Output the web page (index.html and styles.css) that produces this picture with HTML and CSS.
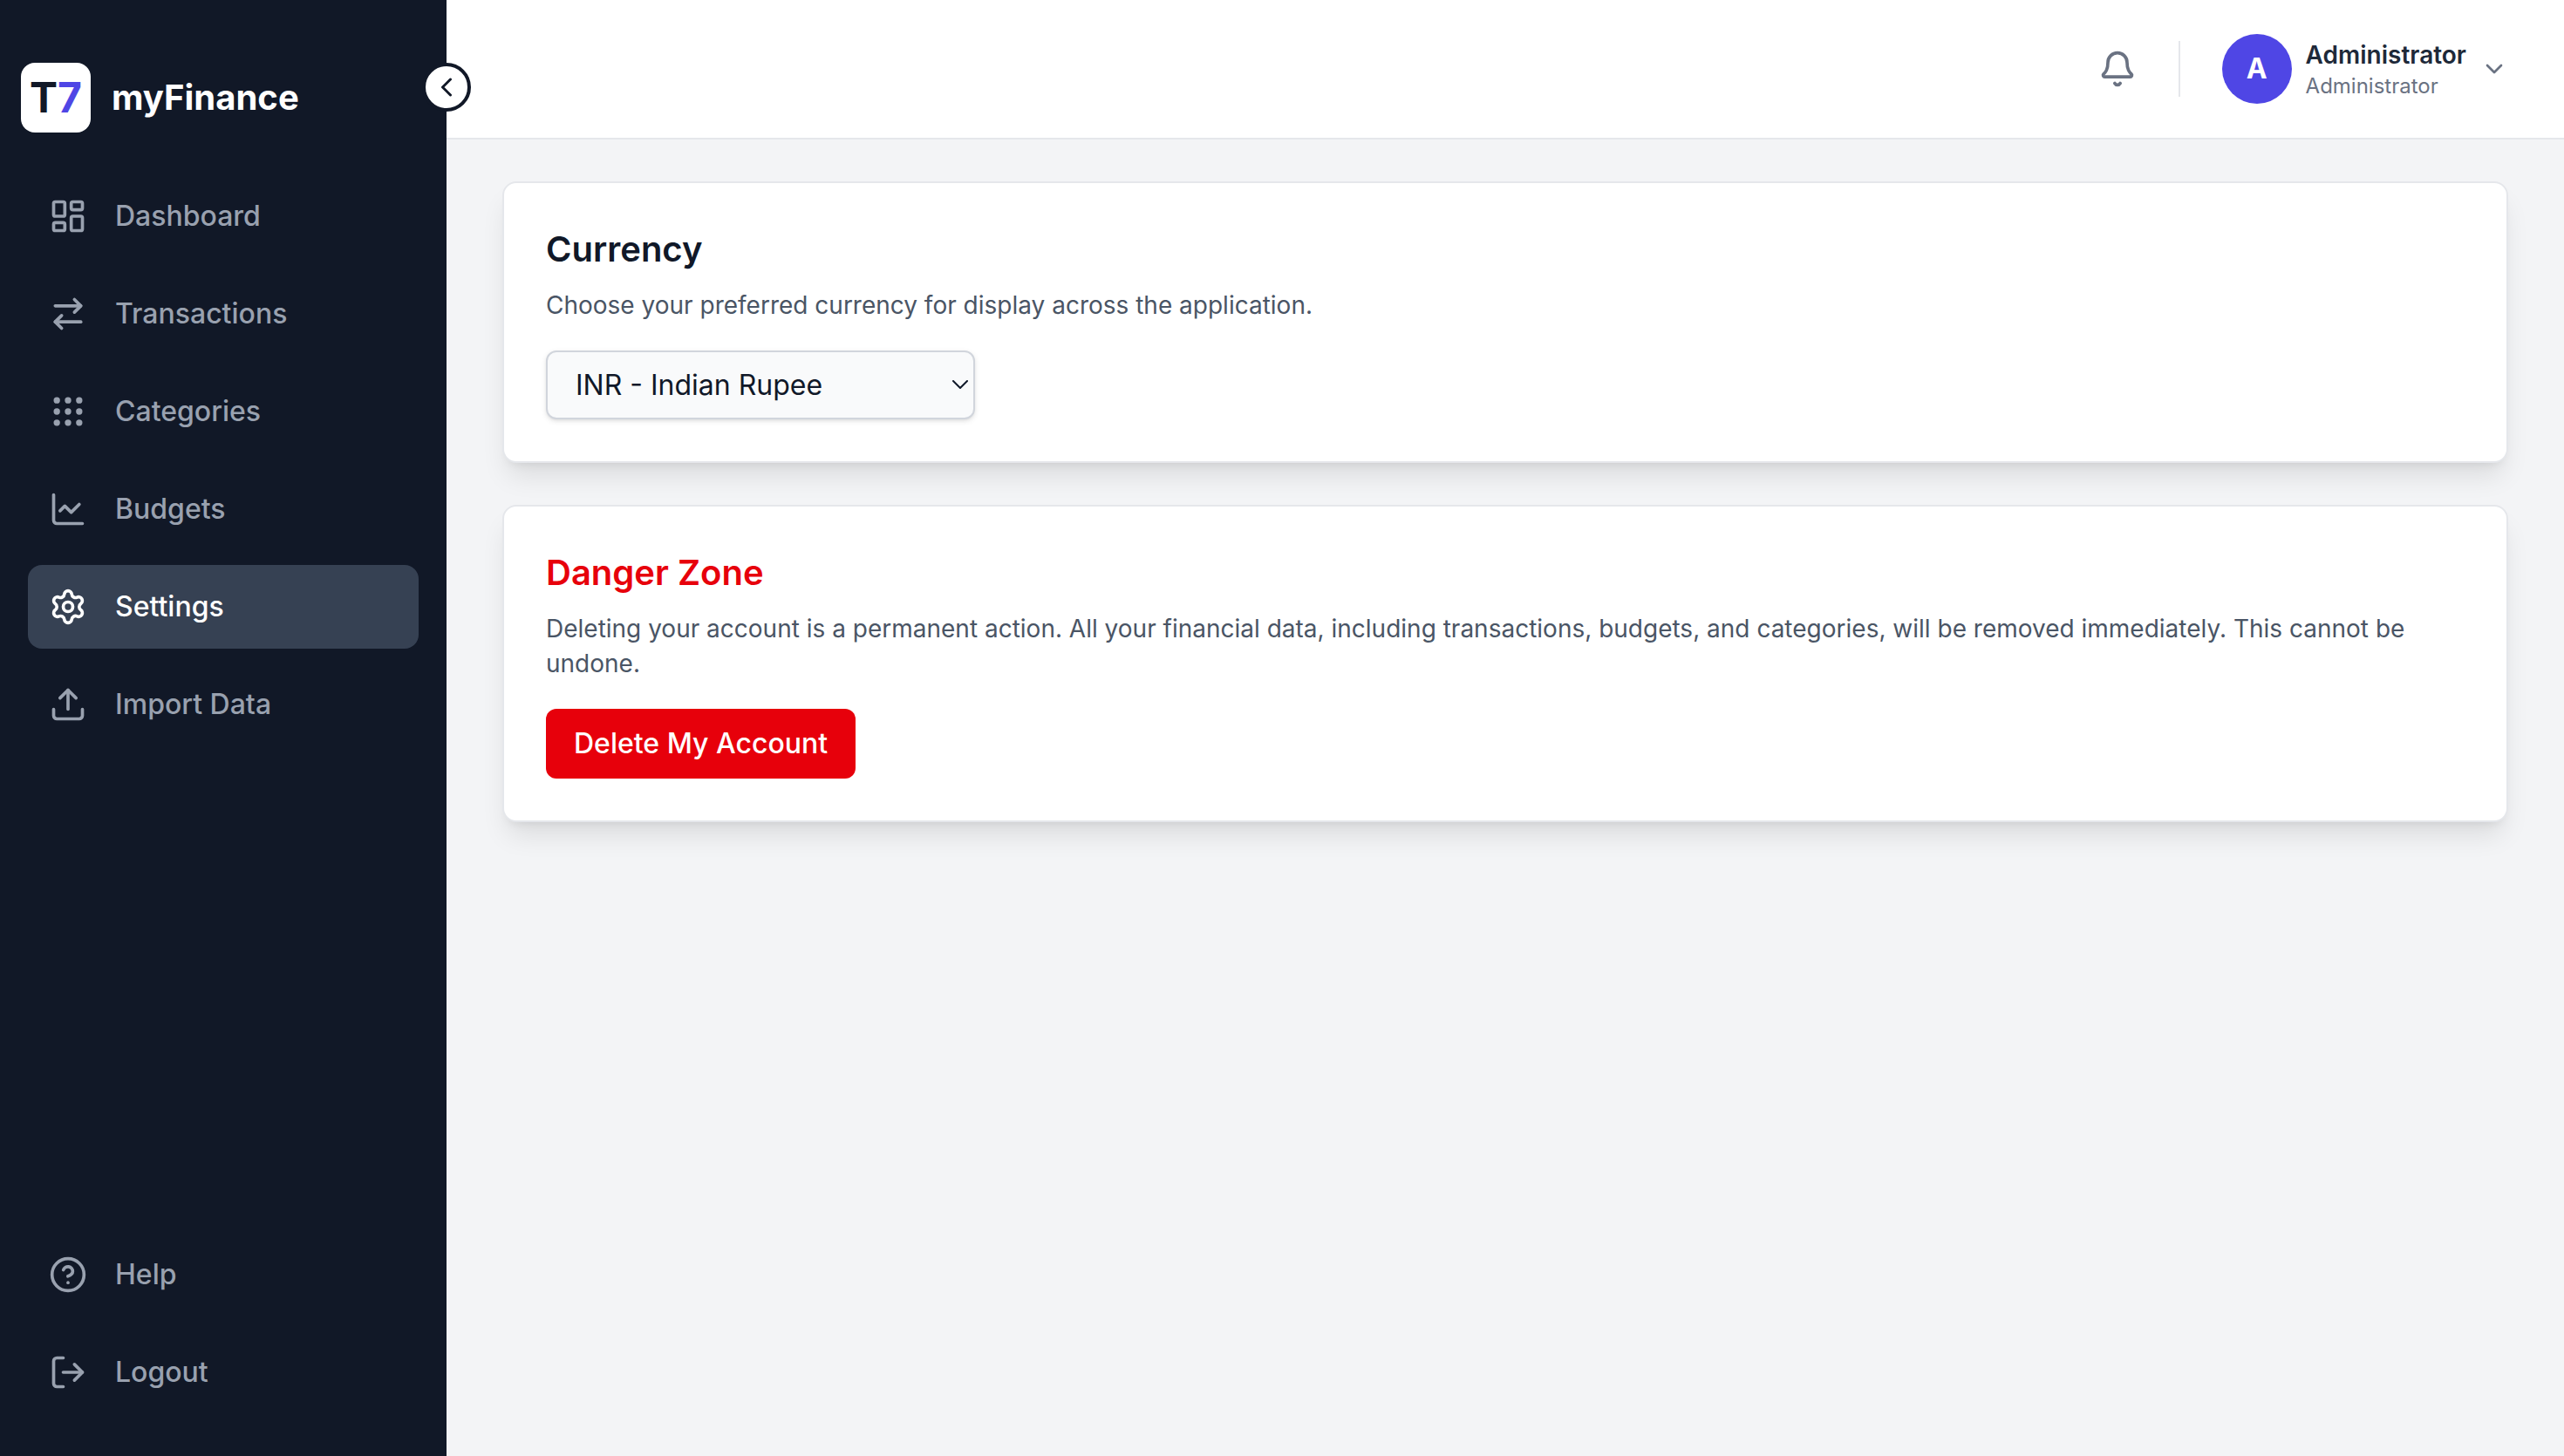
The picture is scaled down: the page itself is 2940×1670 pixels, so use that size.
FILE: index.html
```html
<!DOCTYPE html>
<html lang="en">
<head>
    <meta charset="UTF-8">
    <meta name="viewport" content="width=device-width, initial-scale=1.0">
    <title>myFinance - Settings</title>
    <link rel="stylesheet" href="styles.css">
</head>
<body>
    <!-- Sidebar -->
    <aside class="sidebar">
        <div class="brand">
            <div class="brand-logo">T<span>7</span></div>
            <span class="brand-name">myFinance</span>
        </div>

        <button class="sidebar-toggle" type="button" aria-label="Collapse sidebar">
            <svg viewBox="0 0 24 24"><path d="m15 18-6-6 6-6"/></svg>
        </button>

        <nav class="nav">
            <a href="#dashboard" class="nav-link">
                <svg class="icon" viewBox="0 0 24 24">
                    <rect width="7" height="9" x="3" y="3" rx="1"/>
                    <rect width="7" height="5" x="14" y="3" rx="1"/>
                    <rect width="7" height="9" x="14" y="12" rx="1"/>
                    <rect width="7" height="5" x="3" y="16" rx="1"/>
                </svg>
                <span>Dashboard</span>
            </a>
            <a href="#transactions" class="nav-link">
                <svg class="icon" viewBox="0 0 24 24">
                    <path d="m16 3 4 4-4 4"/>
                    <path d="M20 7H4"/>
                    <path d="m8 21-4-4 4-4"/>
                    <path d="M4 17h16"/>
                </svg>
                <span>Transactions</span>
            </a>
            <a href="#categories" class="nav-link">
                <svg class="icon" viewBox="0 0 24 24">
                    <circle cx="12" cy="5" r="1"/>
                    <circle cx="19" cy="5" r="1"/>
                    <circle cx="5" cy="5" r="1"/>
                    <circle cx="12" cy="12" r="1"/>
                    <circle cx="19" cy="12" r="1"/>
                    <circle cx="5" cy="12" r="1"/>
                    <circle cx="12" cy="19" r="1"/>
                    <circle cx="19" cy="19" r="1"/>
                    <circle cx="5" cy="19" r="1"/>
                </svg>
                <span>Categories</span>
            </a>
            <a href="#budgets" class="nav-link">
                <svg class="icon" viewBox="0 0 24 24">
                    <path d="M3 3v16a2 2 0 0 0 2 2h16"/>
                    <path d="m19 9-5 5-4-4-3 3"/>
                </svg>
                <span>Budgets</span>
            </a>
            <a href="#settings" class="nav-link active">
                <svg class="icon" viewBox="0 0 24 24">
                    <path d="M9.671 4.136a2.34 2.34 0 0 1 4.659 0 2.34 2.34 0 0 0 3.319 1.915 2.34 2.34 0 0 1 2.33 4.033 2.34 2.34 0 0 0 0 3.831 2.34 2.34 0 0 1-2.33 4.033 2.34 2.34 0 0 0-3.319 1.915 2.34 2.34 0 0 1-4.659 0 2.34 2.34 0 0 0-3.32-1.915 2.34 2.34 0 0 1-2.33-4.033 2.34 2.34 0 0 0 0-3.831A2.34 2.34 0 0 1 6.35 6.051a2.34 2.34 0 0 0 3.319-1.915"/>
                    <circle cx="12" cy="12" r="3"/>
                </svg>
                <span>Settings</span>
            </a>
            <a href="#import" class="nav-link">
                <svg class="icon" viewBox="0 0 24 24">
                    <path d="M12 3v12"/>
                    <path d="m17 8-5-5-5 5"/>
                    <path d="M21 15v4a2 2 0 0 1-2 2H5a2 2 0 0 1-2-2v-4"/>
                </svg>
                <span>Import Data</span>
            </a>
        </nav>

        <div class="nav nav-bottom">
            <a href="#help" class="nav-link">
                <svg class="icon" viewBox="0 0 24 24">
                    <circle cx="12" cy="12" r="10"/>
                    <path d="M9.09 9a3 3 0 0 1 5.83 1c0 2-3 3-3 3"/>
                    <path d="M12 17h.01"/>
                </svg>
                <span>Help</span>
            </a>
            <button class="nav-link" type="button">
                <svg class="icon" viewBox="0 0 24 24">
                    <path d="m16 17 5-5-5-5"/>
                    <path d="M21 12H9"/>
                    <path d="M9 21H5a2 2 0 0 1-2-2V5a2 2 0 0 1 2-2h4"/>
                </svg>
                <span>Logout</span>
            </button>
        </div>
    </aside>

    <div class="page">
        <!-- Top Bar -->
        <header class="topbar">
            <button class="bell" type="button" aria-label="Notifications">
                <svg class="icon" viewBox="0 0 24 24">
                    <path d="M10.268 21a2 2 0 0 0 3.464 0"/>
                    <path d="M3.262 15.326A1 1 0 0 0 4 17h16a1 1 0 0 0 .74-1.673C19.41 13.956 18 12.499 18 8A6 6 0 0 0 6 8c0 4.499-1.411 5.956-2.738 7.326"/>
                </svg>
            </button>
            <div class="divider"></div>
            <button class="profile" type="button">
                <span class="avatar">A</span>
                <span class="profile-text">
                    <span class="profile-name">Administrator</span>
                    <span class="profile-role">Administrator</span>
                </span>
                <svg viewBox="0 0 24 24"><path d="m6 9 6 6 6-6"/></svg>
            </button>
        </header>

        <main class="content">
            <!-- Currency Section -->
            <section class="card">
                <h2><label for="currency">Currency</label></h2>
                <p>Choose your preferred currency for display across the application.</p>
                <div class="select-wrapper">
                    <select id="currency">
                        <option value="INR" selected>INR - Indian Rupee</option>
                        <option value="USD">USD - US Dollar</option>
                        <option value="EUR">EUR - Euro</option>
                        <option value="GBP">GBP - British Pound</option>
                    </select>
                    <svg class="select-arrow" viewBox="0 0 18 10"><path d="m1 1 8 8 8-8"/></svg>
                </div>
            </section>

            <!-- Danger Zone Section -->
            <section class="card">
                <h2 class="danger-title">Danger Zone</h2>
                <p>Deleting your account is a permanent action. All your financial data, including transactions, budgets, and categories, will be removed immediately. This cannot be undone.</p>
                <button class="delete-btn" type="button">Delete My Account</button>
            </section>
        </main>
    </div>
</body>
</html>
```
FILE: styles.css
```css
* {
    box-sizing: border-box;
}
body {
    font-family: Inter, "Liberation Sans", sans-serif;
    font-size: 32px;
    line-height: 48px;
    margin: 0;
    min-height: 100vh;
    display: flex;
    background-color: #f3f4f6;
    color: #101828;
}
button, select {
    font: inherit;
    cursor: pointer;
}
svg {
    display: block;
    flex-shrink: 0;
    fill: none;
    stroke: currentColor;
    stroke-width: 2;
    stroke-linecap: round;
    stroke-linejoin: round;
}
.icon {
    width: 44px;
    height: 44px;
}

/* Sidebar */
.sidebar {
    position: relative;
    width: 512px;
    flex-shrink: 0;
    display: flex;
    flex-direction: column;
    padding: 72px 0 48px;
    background-color: #111827;
    color: #99a1af;
}
.brand {
    display: flex;
    align-items: center;
    gap: 24px;
    padding: 0 24px;
    margin-bottom: 48px;
}
.brand-logo {
    width: 80px;
    height: 80px;
    display: flex;
    align-items: center;
    justify-content: center;
    border-radius: 16px;
    background-color: #ffffff;
    color: #111827;
    font-size: 48px;
    font-weight: 700;
}
.brand-logo span {
    color: #4f46e5;
}
.brand-name {
    color: #ffffff;
    font-size: 40px;
    font-weight: 700;
}
.sidebar-toggle {
    position: absolute;
    top: 72px;
    right: -28px;
    width: 56px;
    height: 56px;
    display: flex;
    align-items: center;
    justify-content: center;
    padding: 0;
    border: 4px solid #111827;
    border-radius: 50%;
    background-color: #ffffff;
    color: #111827;
}
.sidebar-toggle svg {
    width: 36px;
    height: 36px;
}
.nav {
    display: flex;
    flex-direction: column;
    gap: 16px;
    padding: 0 32px;
}
.nav-bottom {
    margin-top: auto;
}
.nav-link {
    display: flex;
    align-items: center;
    gap: 32px;
    padding: 24px;
    border: none;
    border-radius: 16px;
    background: none;
    color: inherit;
    font-weight: 500;
    text-decoration: none;
}
.nav-link:hover {
    color: #ffffff;
}
.nav-link.active {
    background-color: #364153;
    color: #ffffff;
}

/* Top bar */
.page {
    flex: 1;
    min-width: 0;
}
.topbar {
    height: 160px;
    display: flex;
    align-items: center;
    justify-content: flex-end;
    gap: 32px;
    padding: 0 48px;
    background-color: #ffffff;
    border-bottom: 2px solid #e5e7eb;
}
.bell {
    padding: 16px;
    border: none;
    background: none;
    color: #6a7282;
}
.divider {
    width: 2px;
    height: 64px;
    background-color: #e5e7eb;
}
.profile {
    display: flex;
    align-items: center;
    gap: 16px;
    padding: 0 16px;
    border: none;
    background: none;
    color: #6a7282;
    text-align: left;
}
.profile svg {
    width: 32px;
    height: 32px;
}
.avatar {
    width: 80px;
    height: 80px;
    display: flex;
    align-items: center;
    justify-content: center;
    border-radius: 50%;
    background-color: #4f46e5;
    color: #ffffff;
    font-weight: 700;
}
.profile-text {
    display: flex;
    flex-direction: column;
}
.profile-name {
    color: #1e2939;
    font-size: 28px;
    font-weight: 600;
    line-height: 40px;
}
.profile-role {
    font-size: 24px;
    line-height: 32px;
}

/* Settings cards */
.content {
    display: flex;
    flex-direction: column;
    gap: 48px;
    padding: 48px 64px;
}
.card {
    padding: 48px;
    border: 2px solid #e5e7eb;
    border-radius: 16px;
    background-color: #ffffff;
    box-shadow: 0 20px 30px -6px rgba(0, 0, 0, 0.1), 0 8px 12px -8px rgba(0, 0, 0, 0.1);
}
.card h2 {
    margin: 0 0 16px;
    font-size: 40px;
    font-weight: 600;
    line-height: 56px;
}
.card .danger-title {
    color: #e7000b;
}
.card p {
    margin: 0 0 32px;
    color: #4a5565;
    font-size: 28px;
    line-height: 40px;
}
.select-wrapper {
    position: relative;
    width: 492px;
    max-width: 100%;
}
.select-wrapper select {
    display: block;
    width: 100%;
    height: 79px;
    padding: 0 32px;
    border: 2px solid #d1d5dc;
    border-radius: 12px;
    background-color: #f9fafb;
    color: #101828;
    box-shadow: 0 2px 6px rgba(0, 0, 0, 0.1), 0 2px 4px -2px rgba(0, 0, 0, 0.1);
    appearance: none;
}
.select-arrow {
    position: absolute;
    top: 34px;
    right: 8px;
    width: 18px;
    height: 10px;
    color: #101828;
    pointer-events: none;
}
.delete-btn {
    display: block;
    padding: 16px 32px;
    border: none;
    border-radius: 12px;
    background-color: #e7000b;
    color: #ffffff;
    font-weight: 500;
}
.delete-btn:hover {
    background-color: #c10007;
}
```
